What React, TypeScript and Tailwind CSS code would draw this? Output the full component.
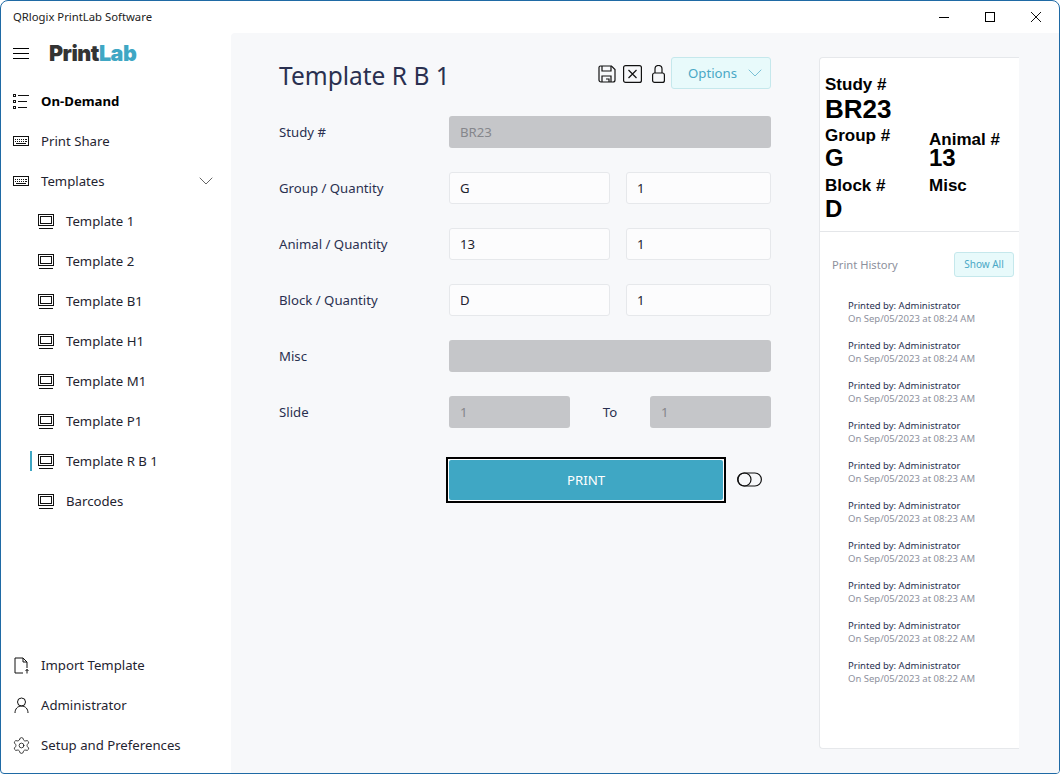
import React from 'react';
import { ChevronDown, Settings } from 'lucide-react';

const templates = ['Template 1', 'Template 2', 'Template B1', 'Template H1', 'Template M1', 'Template P1', 'Template R B 1', 'Barcodes'];

const history = [
    '08:24', '08:24', '08:23', '08:23', '08:23', '08:23', '08:23', '08:23', '08:22', '08:22',
];

function Keyboard() {
    return (
        <svg width="16" height="10" viewBox="0 0 16 10" fill="none" stroke="#111" strokeWidth="1" shapeRendering="crispEdges">
            <rect x="0.5" y="0.5" width="15" height="9" rx="1" />
            <path d="M2 3h1M4 3h1M6 3h1M8 3h1M10 3h1M12 3h2M2 5h1M4 5h1M6 5h1M8 5h1M10 5h1M12 5h2M3 7h10" />
        </svg>
    );
}

function Monitor() {
    return (
        <svg width="16" height="15" viewBox="0 0 16 15" fill="none" stroke="#111" strokeWidth="1" shapeRendering="crispEdges">
            <rect x="0.5" y="0.5" width="15" height="11" rx="1" />
            <rect x="2.5" y="2.5" width="11" height="7" />
            <path d="M1 14h14" />
        </svg>
    );
}

function ListIcon() {
    return (
        <svg width="16" height="15" viewBox="0 0 16 15" fill="none" stroke="#111" strokeWidth="1" shapeRendering="crispEdges">
            <rect x="0.5" y="0.5" width="2" height="2" />
            <rect x="0.5" y="6.5" width="2" height="2" />
            <rect x="0.5" y="12.5" width="2" height="2" />
            <path d="M5 1.5h11M5 7.5h9M5 13.5h9" />
        </svg>
    );
}

function NavRow({ icon, label, bold }: { icon: React.ReactNode, label: string, bold?: boolean }) {
    return (
        <div className="flex items-center h-10 pl-3">
            <div className="w-4 flex justify-center shrink-0">{icon}</div>
            <span className={`ml-3 pt-[2px] text-[13.2px] ${bold ? 'font-bold text-black' : 'text-[#1f2430]'}`}>{label}</span>
        </div>
    );
}

function Field({ value, disabled, className }: { value?: string, disabled?: boolean, className?: string }) {
    return (
        <div className={`h-8 rounded-[3px] flex items-center pt-[2px] text-[13.2px] ${disabled ? 'px-[11px] bg-[#c5c6c9] text-[#85878c]' : 'px-[10px] bg-[#fcfcfd] border border-[#e6e8eb] text-[#1f2430]'} ${className ?? ''}`}>
            {value}
        </div>
    );
}

function FormRow({ label, children }: { label: string, children: React.ReactNode }) {
    return (
        <div className="flex items-center h-8 mb-6">
            <div className="w-[170px] pt-[2px] text-[13.2px] text-[#2a3050]">{label}</div>
            <div className="flex items-center w-[322px] gap-4">{children}</div>
        </div>
    );
}

export default function App() {
    return (
        <div className="w-[1060px] h-[774px] flex flex-col bg-white border border-[#1f6aa5] rounded-t-[8px] rounded-b-[4px] overflow-hidden font-['Noto_Sans',sans-serif]">
            {/* title bar */}
            <div className="h-8 flex items-center shrink-0">
                <span className="ml-3 text-[11.3px] text-[#222]">QRlogix PrintLab Software</span>
                <div className="ml-auto flex items-center">
                    <div className="w-[46px] flex justify-center"><div className="w-[10px] h-px bg-black" /></div>
                    <div className="w-[46px] flex justify-center"><div className="w-[10px] h-[10px] border border-black" /></div>
                    <div className="w-[46px] flex justify-center">
                        <svg width="10" height="10" viewBox="0 0 10 10" stroke="#111" strokeWidth="1"><path d="M0 0l10 10M10 0L0 10" /></svg>
                    </div>
                </div>
            </div>

            <div className="flex flex-1 min-h-0">
                {/* sidebar */}
                <div className="w-[230px] shrink-0 flex flex-col pb-2">
                    <div className="flex items-center h-10 pl-3 shrink-0">
                        <div className="w-4 flex flex-col gap-1 mt-px">
                            <div className="h-px bg-black" />
                            <div className="h-px bg-black" />
                            <div className="h-px bg-black" />
                        </div>
                        <div className="ml-5 pt-[2px] text-[21.5px] font-black leading-none tracking-[-0.5px] font-['Inter',sans-serif]">
                            <span className="text-[#333]">Print</span><span className="text-[#3fa7c4]">Lab</span>
                        </div>
                    </div>
                    <div className="h-2 shrink-0" />
                    <NavRow icon={<ListIcon />} label="On-Demand" bold />
                    <NavRow icon={<Keyboard />} label="Print Share" />
                    <div className="flex items-center h-10 pr-[13px]">
                        <div className="flex-1"><NavRow icon={<Keyboard />} label="Templates" /></div>
                        <ChevronDown size={24} strokeWidth={0.7} color="#222" />
                    </div>
                    {templates.map((t) => (
                        <div key={t} className="relative flex items-center h-10 pl-[37px]">
                            {t === 'Template R B 1' && <div className="absolute left-[29px] top-[10px] w-[2px] h-5 bg-[#3fa7c4]" />}
                            <Monitor />
                            <span className="ml-[12px] pt-[2px] text-[13.2px] text-[#1f2430]">{t}</span>
                        </div>
                    ))}
                    <div className="mt-auto">
                        <NavRow
                            label="Import Template"
                            icon={
                                <svg width="15" height="17" viewBox="0 0 15 17" fill="none" stroke="#111" strokeWidth="1">
                                    <path d="M9 16H1V1h8l4 4v6M9 1v4h4M13 12v4.5M11.5 14l1.5-1.5 1.5 1.5" />
                                </svg>
                            }
                        />
                        <NavRow
                            label="Administrator"
                            icon={
                                <svg width="15" height="16" viewBox="0 0 15 16" fill="none" stroke="#111" strokeWidth="1">
                                    <circle cx="7.5" cy="5" r="4" />
                                    <path d="M1 16c0-4 2.5-7 6.5-7s6.500 3 6.500 7" />
                                </svg>
                            }
                        />
                        <NavRow icon={<Settings size={19} strokeWidth={1} color="#111" className="shrink-0" />} label="Setup and Preferences" />
                    </div>
                </div>

                {/* main */}
                <div className="flex-1 bg-[#f7f8fa] flex min-w-0 pl-12 pr-10 pt-6 pb-6 gap-12 rounded-tl-[4px]">
                    <div className="w-[492px] shrink-0">
                        <div className="flex items-start h-10 mb-[19px]">
                            <h1 className="text-[24.5px] text-[#2a3050] leading-none mt-[7px]">Template R B 1</h1>
                            <div className="ml-auto flex items-start">
                                <svg className="mt-[8px]" width="18" height="18" viewBox="0 0 18 18" fill="none" stroke="#111" strokeWidth="1.200">
                                    <path d="M2.500 1h11L17 4.500V15a2 2 0 0 1-2 2H3a2 2 0 0 1-2-2V2.500A1.500 1.500 0 0 1 2.500 1z" />
                                    <path d="M4 1v5h9V1M4 17v-6h9v6M8 14h3v3" />
                                </svg>
                                <svg className="ml-[7px] mt-[8px]" width="19" height="18" viewBox="0 0 19 18" fill="none" stroke="#111" strokeWidth="1.200">
                                    <rect x="0.600" y="0.600" width="17.800" height="16.800" rx="2" />
                                    <path d="M5.500 5l8 8M13.500 5l-8 8" />
                                </svg>
                                <svg className="ml-[10px] mt-[8px]" width="13" height="18" viewBox="0 0 13 18" fill="none" stroke="#111" strokeWidth="1.200">
                                    <rect x="0.600" y="8" width="11.800" height="9.400" rx="2" />
                                    <path d="M3 8V4a3.500 3.500 0 0 1 7 0v4" />
                                </svg>
                                <div className="ml-[6px] w-[100px] h-8 bg-[#e8fafb] border border-[#c5e8ec] rounded-[3px] flex items-center pl-4 pr-[3px] justify-between text-[13.2px] text-[#4aa8c6]">
                                    <span className="pt-[2px]">Options</span>
                                    <ChevronDown size={24} strokeWidth={0.7} color="#4aa8c6" />
                                </div>
                            </div>
                        </div>

                        <FormRow label="Study #"><Field value="BR23" disabled className="flex-1" /></FormRow>
                        <FormRow label="Group / Quantity"><Field value="G" className="w-[161px]" /><Field value="1" className="flex-1" /></FormRow>
                        <FormRow label="Animal / Quantity"><Field value="13" className="w-[161px]" /><Field value="1" className="flex-1" /></FormRow>
                        <FormRow label="Block / Quantity"><Field value="D" className="w-[161px]" /><Field value="1" className="flex-1" /></FormRow>
                        <FormRow label="Misc"><Field disabled className="flex-1" /></FormRow>
                        <div className="flex items-center h-8 mb-[29px]">
                            <div className="w-[170px] pt-[2px] text-[13.2px] text-[#2a3050]">Slide</div>
                            <Field value="1" disabled className="w-[121px]" />
                            <div className="w-[80px] pt-[2px] text-center text-[13.2px] text-[#2a3050]">To</div>
                            <Field value="1" disabled className="w-[121px]" />
                        </div>
                        <div className="flex items-center pl-[167px]">
                            <div className="w-[280px] h-[46px] border-2 border-black bg-white p-px">
                                <div className="h-full pt-[2px] bg-[#3fa7c4] rounded-[2px] flex items-center justify-center text-[13.2px] text-white">PRINT</div>
                            </div>
                            <svg className="ml-[11px] mb-[2px]" width="25" height="15" viewBox="0 0 25 15" fill="none" stroke="#111" strokeWidth="1.200">
                                <rect x="0.600" y="1" width="23.800" height="13" rx="6.500" />
                                <circle cx="7.500" cy="7.500" r="6.500" />
                            </svg>
                        </div>
                    </div>

                    {/* label preview + history */}
                    <div className="w-[200px] shrink-0 bg-white border border-r-0 border-[#e6e8eb] rounded-l-[4px] flex flex-col font-['Liberation_Sans',sans-serif]">
                        <div className="h-[174px] border-b border-[#e4e6e9] pl-[5px] pt-[17px] font-bold text-black shrink-0">
                            <div className="text-[17px] leading-5">Study #</div>
                            <div className="text-[26px] leading-[28px]">BR23</div>
                            <div className="flex mt-[3px]">
                                <div className="w-[104px]">
                                    <div className="text-[17px] leading-5">Group #</div>
                                    <div className="text-[24px] leading-[24px]">G</div>
                                    <div className="text-[17px] leading-5 mt-[6px]">Block #</div>
                                    <div className="text-[24px] leading-[26px]">D</div>
                                </div>
                                <div className="pt-[4px]">
                                    <div className="text-[17px] leading-5">Animal #</div>
                                    <div className="text-[24px] leading-[16px]">13</div>
                                    <div className="text-[17px] leading-5 mt-[10px]">Misc</div>
                                </div>
                            </div>
                        </div>
                        <div className="flex items-center pt-5 pl-3 pr-[5px] font-['Noto_Sans',sans-serif]">
                            <span className="pt-[2px] text-[11.2px] text-[#8d909c]">Print History</span>
                            <div className="ml-auto w-[60px] h-[25px] bg-[#e8fafb] border border-[#c5e8ec] rounded-[3px] flex items-center justify-center text-[10px] text-[#4aa8c6]">Show All</div>
                        </div>
                        <div className="pl-7 pt-[22px] flex flex-col gap-[14px] font-['Noto_Sans',sans-serif]">
                            {history.map((time, i) => (
                                <div key={i} className="text-[9.5px] leading-[13px]">
                                    <div className="text-[#2a3050]">Printed by: Administrator</div>
                                    <div className="text-[#8d909c]">On Sep/05/2023 at {time} AM</div>
                                </div>
                            ))}
                        </div>
                    </div>
                </div>
            </div>
        </div>
    );
}
